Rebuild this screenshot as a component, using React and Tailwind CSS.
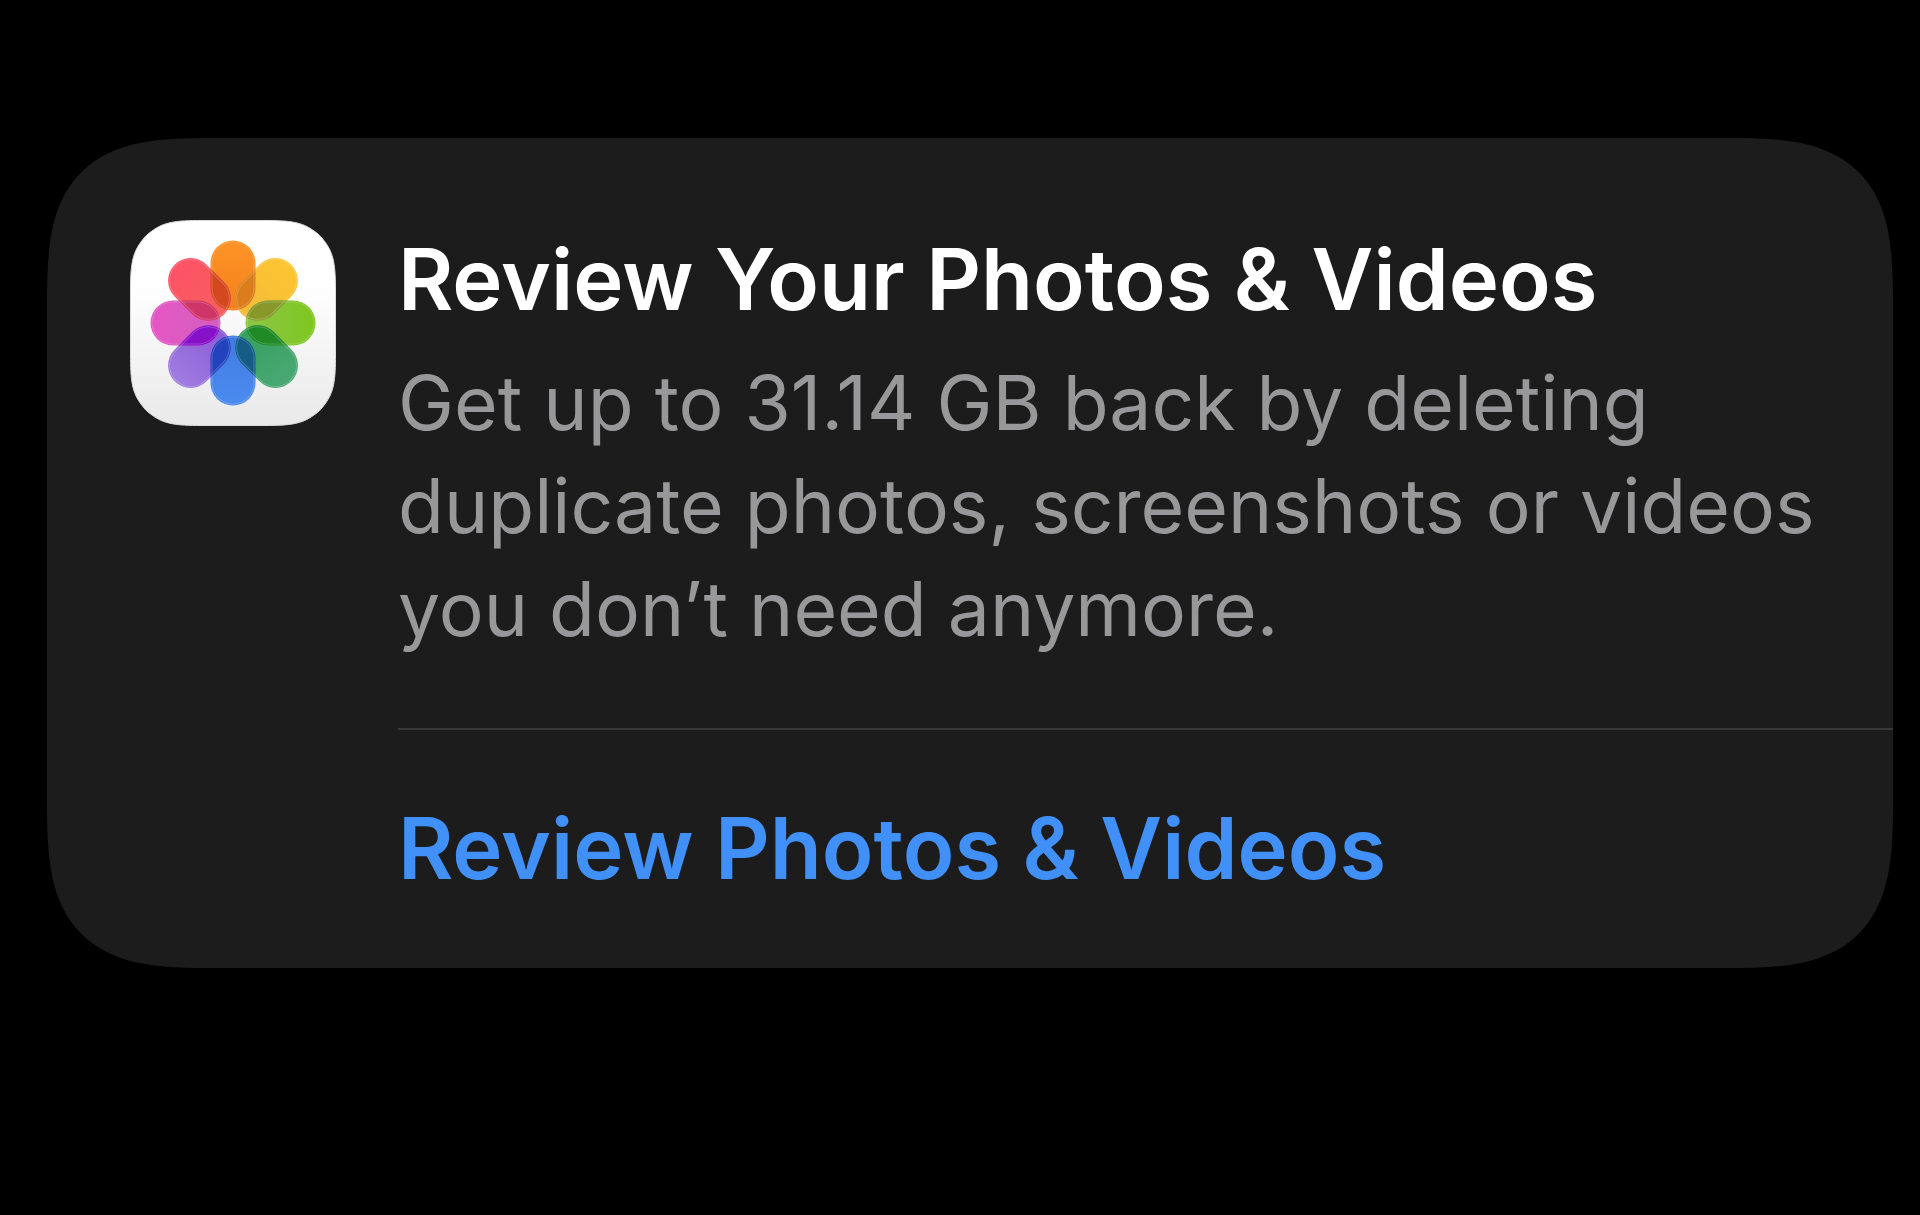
import React from "react";

// petals of the icon, clockwise from the top
// overlap is the colour where a petal crosses the next one
const petals = [
  { angle: 0, outer: "#fd9426", inner: "#f57f1c", overlap: "#dc7d1c" },
  { angle: 45, outer: "#fdc52f", inner: "#f3bb3c", overlap: "#88992a" },
  { angle: 90, outer: "#7cc71f", inner: "#8fc449", overlap: "#1f8a26" },
  { angle: 135, outer: "#4aa874", inner: "#35a05c", overlap: "#155c86" },
  { angle: 180, outer: "#4c8bf0", inner: "#3f7be0", overlap: "#2343bd" },
  { angle: 225, outer: "#a07ce0", inner: "#8a5bd6", overlap: "#8711c9" },
  { angle: 270, outer: "#e556c4", inner: "#d25fc0", overlap: "#cf3568" },
  { angle: 315, outer: "#ff5166", inner: "#f4605c", overlap: "#d4481f" },
];

function PhotosIcon() {
  return (
    <svg
      viewBox="0 0 206 206"
      className="w-[206px] h-[206px] shrink-0"
      role="img"
      aria-label="Photos"
    >
      <defs>
        <linearGradient id="tile" x1="0" y1="0" x2="0" y2="1">
          <stop offset="0.3" stopColor="#ffffff" />
          <stop offset="1" stopColor="#e9e9ea" />
        </linearGradient>
        {petals.map((p) => (
          <React.Fragment key={p.angle}>
            <linearGradient id={`petal-${p.angle}`} x1="0" y1="0" x2="0" y2="1">
              <stop offset="0" stopColor={p.outer} />
              <stop offset="1" stopColor={p.inner} />
            </linearGradient>
            <clipPath id={`clip-${p.angle}`}>
              <rect x="-22.5" y="-82.5" width="45" height="70" rx="22.5" transform={`rotate(${p.angle})`} />
            </clipPath>
          </React.Fragment>
        ))}
      </defs>
      <path
        d="M71 .5H135C160 .5 172 2 184 11C190 15 192 18 195 22C204 34 205.5 46 205.5 71V135C205.5 160 204 172 195 184C192 188 190 191 184 195C172 204 160 205.5 135 205.5H71C46 205.5 34 204 22 195C16 191 14 188 11 184C2 172 .5 160 .5 135V71C.5 46 2 34 11 22C14 18 16 15 22 11C34 2 46 .5 71 .5Z"
        fill="url(#tile)"
        stroke="#dcdcdc"
      />
      <g transform="translate(103 103)">
        {petals.map((p) => (
          <rect
            key={p.angle}
            x="-22.5"
            y="-82.5"
            width="45"
            height="70"
            rx="22.5"
            fill={`url(#petal-${p.angle})`}
            transform={`rotate(${p.angle})`}
          />
        ))}
        {petals.map((p) => (
          <g key={p.angle} clipPath={`url(#clip-${p.angle})`}>
            <rect
              x="-22.5"
              y="-82.5"
              width="45"
              height="70"
              rx="22.5"
              fill={p.overlap}
              transform={`rotate(${p.angle + 45})`}
            />
          </g>
        ))}
        {petals.map((p) => (
          <rect
            key={p.angle}
            x="-21"
            y="-81"
            width="42"
            height="67"
            rx="21"
            fill="none"
            stroke="#ffffff"
            strokeOpacity="0.2"
            transform={`rotate(${p.angle})`}
          />
        ))}
      </g>
    </svg>
  );
}

export default function App() {
  return (
    <main className="min-h-screen bg-black pt-[138px] pl-[47px] pr-[27px] pb-10 font-['Inter',sans-serif]">
      <section className="flex items-start gap-[62px] overflow-hidden rounded-[168px] [corner-shape:superellipse(1.6)] bg-[#1c1c1c] pl-[83px]">
        <div className="pt-[82px] shrink-0">
          <PhotosIcon />
        </div>

        <div className="flex-1 min-w-0">
          <div className="pt-[89px] pb-[68px] pr-16">
            <h1 className="text-[85px] leading-[106px] font-semibold text-white">
              Review Your Photos &amp; Videos
            </h1>
            <p className="mt-[18px] text-[75px] leading-[103px] text-[#98989b]">
              Get up to 31.14 GB back by deleting duplicate photos, screenshots or videos you don’t need anymore.
            </p>
          </div>

          <button
            type="button"
            className="block w-full border-t-2 border-[#38383a] text-left text-[85px] leading-[238px] font-semibold text-[#4090f7] cursor-pointer"
          >
            Review Photos &amp; Videos
          </button>
        </div>
      </section>
    </main>
  );
}
